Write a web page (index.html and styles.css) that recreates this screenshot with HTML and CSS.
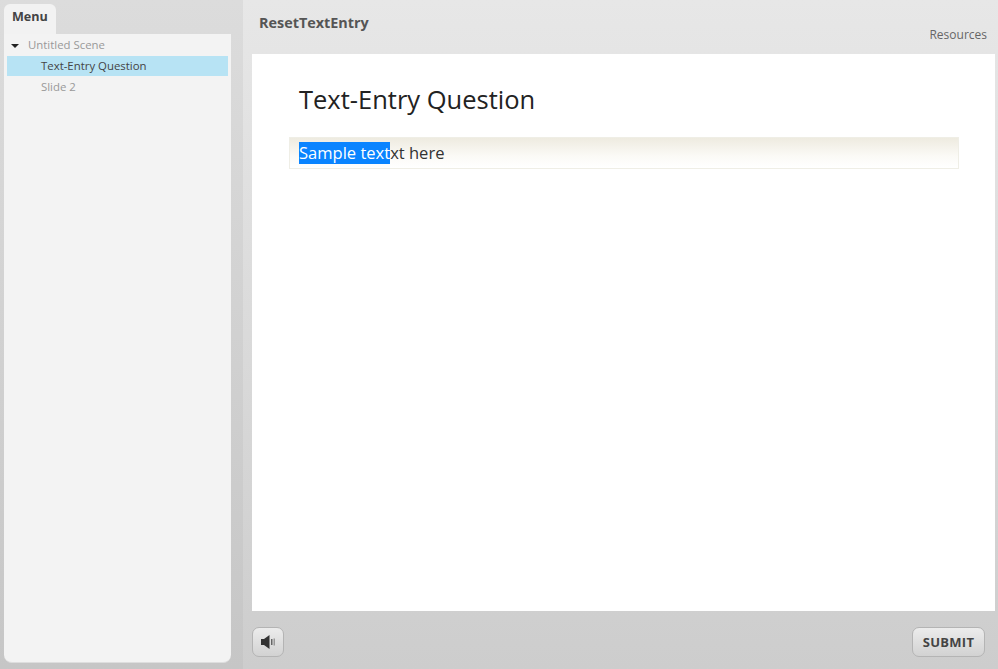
FILE: index.html
```html
<!DOCTYPE html>
<html lang="en">
<head>
<meta charset="utf-8">
<title>ResetTextEntry</title>
<link rel="stylesheet" href="styles.css">
</head>
<body>
<div class="player">
  <aside class="sidebar">
    <div class="tab">Menu</div>
    <nav class="panel">
      <div class="row scene"><svg class="caret" width="8" height="4" viewBox="0 0 8 4"><path d="M0 0H8L4 4Z" fill="#222"/></svg><span>Untitled Scene</span></div>
      <div class="row slide active">Text-Entry Question</div>
      <div class="row slide">Slide 2</div>
    </nav>
  </aside>
  <main class="main">
    <header class="header">
      <div class="course">ResetTextEntry</div>
      <div class="resources">Resources</div>
    </header>
    <section class="slide-area">
      <h1 class="question">Text-Entry Question</h1>
      <div class="entry"><span class="selected">Sample text</span><span>xt here</span></div>
    </section>
    <footer class="footer">
      <button class="btn volume" aria-label="Volume"><svg width="16" height="16" viewBox="0 0 16 16"><path d="M1 5H4L9.5 1V15L4 11H1Z" fill="#333"/><rect x="11" y="5" width="1.5" height="6" fill="#666"/><rect x="13.5" y="4.5" width="1.5" height="7" fill="#999"/></svg></button>
      <button class="btn submit">SUBMIT</button>
    </footer>
  </main>
</div>
</body>
</html>
```
FILE: styles.css
```css
* { box-sizing: border-box; }
html, body { margin: 0; height: 100%; overflow: hidden; }
body { font-family: "Open Sans", sans-serif; }
.player { display: flex; width: 998px; height: 669px; }
.sidebar {
  width: 243px; padding: 4px 12px 6px 4px; display: flex; flex-direction: column; align-items: flex-start;
  background: linear-gradient(#dcdcdc, #c6c6c6);
}
.tab {
  width: 52px; height: 30px; padding: 4px 0 0 8px; background: #f2f2f2;
  border-radius: 6px 6px 0 0; font-size: 12.6px; font-weight: 700; color: #444; line-height: 18px;
}
.panel {
  flex: 1; width: 100%; padding: 2px 3px 0; background: #f3f3f3;
  border-radius: 0 0 8px 8px; border-bottom: 1px solid #dedede;
}
.row { height: 20px; font-size: 11.4px; line-height: 20px; color: #999; }
.scene { display: flex; align-items: center; height: 20px; }
.scene span { position: relative; top: -1px; }
.caret { margin-left: 4px; margin-right: 9px; }
.slide { padding-left: 34px; }
.slide:last-child { margin-top: 1px; }
.active { background: #b7e3f4; color: #444; }
.main { flex: 1; display: flex; flex-direction: column; background: linear-gradient(#e7e7e7, #cdcdcd); }
.header { height: 54px; display: flex; justify-content: space-between; padding: 14px 11px 0 16px; }
.course { font-size: 14.4px; font-weight: 700; color: #555; line-height: 18px; }
.resources { font-size: 12px; color: #666; line-height: 16px; margin-top: 13px; }
.slide-area { margin: 0 3px 0 9px; height: 557px; background: #fff; padding: 28px 36px 0 37px; }
.question { margin: 0 0 20px 10px; font-size: 25.5px; font-weight: 400; line-height: 35px; color: #222; }
.entry {
  height: 32px; padding: 4px 9px; font-size: 16.55px; line-height: 22px; color: #333;
  border: 1px solid #efeee6; background: linear-gradient(#eeebe0, #fbfaf6 60%, #fff); display: flex;
}
.selected { background: #0a84ff; color: #fff; }
.footer { flex: 1; display: flex; justify-content: space-between; align-items: flex-start; padding: 16px 13px 0 9px; }
.btn {
  height: 30px; border: 1px solid #b4b4b4; border-radius: 7px; padding: 0;
  background: linear-gradient(#ececec, #d2d2d2); font-family: inherit; display: flex; align-items: center; justify-content: center;
}
.volume { width: 32px; }
.submit { width: 73px; font-size: 13px; font-weight: 700; color: #444; letter-spacing: .3px; }
```
